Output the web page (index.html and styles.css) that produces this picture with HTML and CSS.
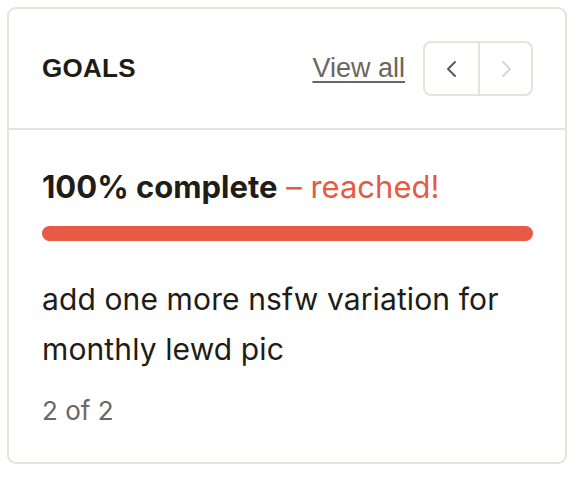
FILE: index.html
```html
<!DOCTYPE html>
<html>
<head>
<meta charset="utf-8">
<link rel="stylesheet" href="styles.css">
</head>
<body>
<div class="page">
  <section class="card">
    <header class="card-header">
      <h2 class="title">GOALS</h2>
      <div class="actions">
        <a class="view-all" href="#">View all</a>
        <div class="pager">
          <button class="pager-btn" aria-label="Previous">
            <svg width="14" height="22" viewBox="0 0 14 22"><path d="M10 4 L3 11 L10 18" fill="none" stroke="#5d5852" stroke-width="2" stroke-linecap="round" stroke-linejoin="round"/></svg>
          </button>
          <button class="pager-btn" aria-label="Next">
            <svg width="14" height="22" viewBox="0 0 14 22"><path d="M4 4 L11 11 L4 18" fill="none" stroke="#d9d7d1" stroke-width="2" stroke-linecap="round" stroke-linejoin="round"/></svg>
          </button>
        </div>
      </div>
    </header>
    <div class="card-body">
      <p class="status"><strong>100% complete</strong> <span class="reached">– reached!</span></p>
      <div class="bar"><div class="bar-fill" style="width:100%"></div></div>
      <p class="goal-text">add one more nsfw variation for monthly lewd pic</p>
      <p class="count">2 of 2</p>
    </div>
  </section>
</div>
</body>
</html>
```

FILE: styles.css
```css
* { box-sizing: border-box; }
html, body { margin: 0; padding: 0; background: #fff; }
body { font-family: Inter, "Liberation Sans", sans-serif; color: #211c15; }
.page { padding: 7px; }
.card {
  width: 560px;
  height: 457px;
  border: 2px solid #e4e3de;
  border-radius: 9px;
  background: #fff;
}
.card-header {
  height: 121px;
  border-bottom: 2px solid #e4e3de;
  display: flex;
  align-items: center;
  justify-content: space-between;
  padding: 0 32px 0 33px;
}
.title {
  margin: 0;
  font-family: "Liberation Sans", Arial, sans-serif;
  font-weight: 700;
  font-size: 26px;
  letter-spacing: 0.3px;
  color: #211c15;
}
.actions { display: flex; align-items: center; gap: 18px; }
.view-all {
  font-family: "Liberation Sans", Arial, sans-serif;
  font-size: 27px;
  color: #6b6660;
  text-decoration: underline;
  text-underline-offset: 4px;
  text-decoration-thickness: 2px;
}
.pager {
  display: flex;
  border: 2px solid #e4e3de;
  border-radius: 8px;
  height: 55px;
}
.pager-btn {
  width: 53px;
  height: 51px;
  border: 0;
  background: transparent;
  display: flex;
  align-items: center;
  justify-content: center;
  padding: 0;
}
.pager-btn + .pager-btn { border-left: 2px solid #e4e3de; }
.card-body { padding: 37px 32px 0 33px; }
.status {
  margin: 0;
  font-size: 31px;
  line-height: 40px;
  letter-spacing: 0;
}
.status strong { font-weight: 700; color: #211c15; }
.reached { color: #e65a45; }
.bar {
  margin-top: 19px;
  height: 15px;
  border-radius: 8px;
  background: #f1efea;
}
.bar-fill { height: 100%; border-radius: 8px; background: #e65a46; }
.goal-text {
  margin: 33px 0 0;
  font-size: 30px;
  line-height: 50px;
  letter-spacing: 0.12px;
  color: #211c15;
}
.count {
  margin: 22px 0 0;
  font-size: 26px;
  line-height: 30px;
  color: #6b6660;
}
```
